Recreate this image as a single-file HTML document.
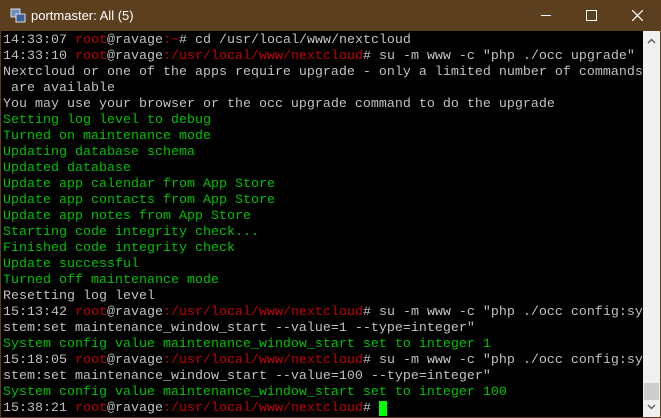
<html><head><style>
body{margin:0;width:661px;height:418px;overflow:hidden;background:#5b3f1f;position:relative;font-family:"Liberation Sans",sans-serif}
#tb{position:absolute;left:0;top:0;width:661px;height:31px;background:#5b3f1f;color:#fff;font-size:13px}
#term{position:absolute;left:1px;top:31px;width:642px;height:386px;background:#000;overflow:hidden}
pre{margin:0;padding:0 0 0 2px;font-family:"Liberation Mono",monospace;font-size:13.33px;line-height:16px;color:#c0c0c0;position:relative;top:2px}
.r{color:#c00000}.g{color:#00c000}
#sb{position:absolute;left:643px;top:31px;width:17px;height:386px;background:#f0f0f0}
</style></head><body>
<div id="tb">
<svg style="position:absolute;left:10px;top:8px" width="16" height="16"><rect x="1" y="1" width="9" height="8" fill="#6a8fc0" stroke="#ddd"/><rect x="6" y="6" width="9" height="8" fill="#3a5f9f" stroke="#ddd"/></svg>
<span style="position:absolute;left:31px;top:8px">portmaster: All (5)</span>
<div style="position:absolute;left:541px;top:15px;width:10px;height:1px;background:#fff"></div>
<div style="position:absolute;left:586px;top:10px;width:9px;height:9px;border:1px solid #fff"></div>
<svg style="position:absolute;left:632px;top:10px" width="11" height="11"><path d="M0 0L11 11M11 0L0 11" stroke="#fff" stroke-width="1.2"/></svg>
</div>
<div id="term"><pre>14:33:07 <span class="r">root</span>@ravage<span class="r">:~</span># cd /usr/local/www/nextcloud
14:33:10 <span class="r">root</span>@ravage<span class="r">:/usr/local/www/nextcloud</span># su -m www -c "php ./occ upgrade"
Nextcloud or one of the apps require upgrade - only a limited number of commands
 are available
You may use your browser or the occ upgrade command to do the upgrade
<span class="g">Setting log level to debug
Turned on maintenance mode
Updating database schema
Updated database
Update app calendar from App Store
Update app contacts from App Store
Update app notes from App Store
Starting code integrity check...
Finished code integrity check
Update successful
Turned off maintenance mode</span>
Resetting log level
15:13:42 <span class="r">root</span>@ravage<span class="r">:/usr/local/www/nextcloud</span># su -m www -c "php ./occ config:sy
stem:set maintenance_window_start --value=1 --type=integer"
<span class="g">System config value maintenance_window_start set to integer 1</span>
15:18:05 <span class="r">root</span>@ravage<span class="r">:/usr/local/www/nextcloud</span># su -m www -c "php ./occ config:sy
stem:set maintenance_window_start --value=100 --type=integer"
<span class="g">System config value maintenance_window_start set to integer 100</span>
15:38:21 <span class="r">root</span>@ravage<span class="r">:/usr/local/www/nextcloud</span># <span style="background:#00ff00"> </span></pre></div>
<div id="sb">
<svg style="position:absolute;left:4px;top:7px" width="9" height="6"><path d="M1 5L4.5 1.5L8 5" stroke="#606060" fill="none" stroke-width="1.5"/></svg>
<div style="position:absolute;left:1px;top:352px;width:15px;height:17px;background:#cdcdcd"></div>
<svg style="position:absolute;left:4px;top:373px" width="9" height="6"><path d="M1 1L4.5 4.5L8 1" stroke="#606060" fill="none" stroke-width="1.5"/></svg>
</div>
</body></html>
